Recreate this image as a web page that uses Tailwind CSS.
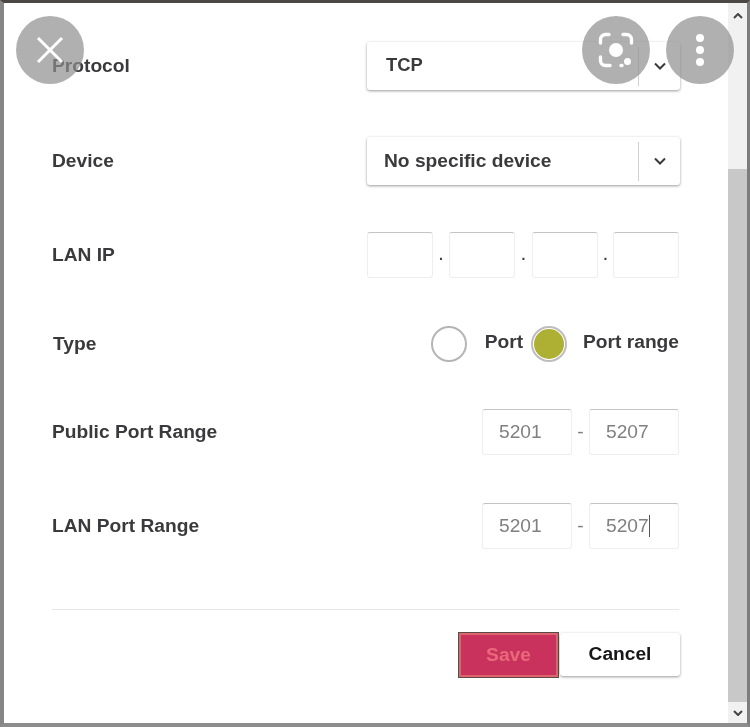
<!doctype html>
<html>

<head>
    <meta charset="UTF-8">
    <meta name="viewport" content="width=device-width, initial-scale=1.0">
    <script src="https://cdn.jsdelivr.net/npm/@tailwindcss/browser@4"></script>
</head>

<body class="w-[750px] h-[727px] overflow-hidden bg-[#8a8a8a] font-['Liberation_Sans',Arial,sans-serif]">
    <div class="relative w-[750px] h-[727px] border-t-[3px] border-t-[#4a4744] border-l-[4px] border-l-[#868686] border-r-[3px] border-r-[#7d7d7d] border-b-[4px] border-b-[#8c8c8c] bg-white flex">

        <!-- dialog body -->
        <div class="w-[724px] h-full pl-[48px] pr-[49px] pt-[39px] text-[#3a3a3c] font-bold text-[19.2px] blur-[0.6px]">

            <div class="flex items-center justify-between h-[48px]">
                <span class="pt-px">Protocol</span>
                <div class="-mr-px w-[313px] h-[48px] rounded-[3px] bg-white shadow-[0_1px_3px_rgba(0,0,0,0.4)] flex items-center">
                    <span class="flex-1 pl-[19px] pb-[2px] text-[18.4px]">TCP</span>
                    <div class="w-px h-[39px] bg-[#d0d0d0]"></div>
                    <div class="w-[41px] flex justify-center">
                        <svg width="12" height="8" viewBox="0 0 12 8" fill="none" stroke="#3a3a3c" stroke-width="2"><path d="M1 1.5l5 5 5-5" /></svg>
                    </div>
                </div>
            </div>

            <div class="flex items-center justify-between h-[48px] mt-[47px]">
                <span class="pt-px">Device</span>
                <div class="-mr-px w-[313px] h-[48px] rounded-[3px] bg-white shadow-[0_1px_3px_rgba(0,0,0,0.4)] flex items-center">
                    <span class="flex-1 pl-[17px]">No specific device</span>
                    <div class="w-px h-[39px] bg-[#d0d0d0]"></div>
                    <div class="w-[41px] flex justify-center">
                        <svg width="12" height="8" viewBox="0 0 12 8" fill="none" stroke="#3a3a3c" stroke-width="2"><path d="M1 1.5l5 5 5-5" /></svg>
                    </div>
                </div>
            </div>

            <div class="flex items-center justify-between h-[46px] mt-[47px]">
                <span class="pt-px">LAN IP</span>
                <div class="flex items-center">
                    <div class="w-[66px] h-[46px] rounded-[3px] border border-[#eeeeee] border-t-[#c4c4c4] bg-white"></div>
                    <span class="w-[16px] text-center text-[14px]">.</span>
                    <div class="w-[66px] h-[46px] rounded-[3px] border border-[#eeeeee] border-t-[#c4c4c4] bg-white"></div>
                    <span class="w-[17px] text-center text-[14px]">.</span>
                    <div class="w-[66px] h-[46px] rounded-[3px] border border-[#eeeeee] border-t-[#c4c4c4] bg-white"></div>
                    <span class="w-[15px] text-center text-[14px]">.</span>
                    <div class="w-[66px] h-[46px] rounded-[3px] border border-[#eeeeee] border-t-[#c4c4c4] bg-white"></div>
                </div>
            </div>

            <div class="flex items-center justify-between h-[36px] mt-[48px]">
                <span class="ml-px pt-px">Type</span>
                <div class="flex items-center">
                    <div class="w-[36px] h-[36px] rounded-full border-2 border-[#b5b5b5] bg-white"></div>
                    <span class="ml-[17.500px] -mt-[4px]">Port</span>
                    <div class="ml-[8px] w-[36px] h-[36px] rounded-full border-2 border-[#bdbdbd] bg-white flex items-center justify-center">
                        <div class="w-[30px] h-[30px] rounded-full bg-[#aeb033]"></div>
                    </div>
                    <span class="ml-[16px] -mt-[4px]">Port range</span>
                </div>
            </div>

            <div class="flex items-center justify-between h-[46px] mt-[47px]">
                <span class="pt-px">Public Port Range</span>
                <div class="flex items-center font-normal text-[#808080]">
                    <div class="w-[90px] h-[46px] pl-[16px] flex items-center rounded-[3px] border border-[#eeeeee] border-t-[#c4c4c4] bg-white">5201</div>
                    <span class="w-[17px] text-center">-</span>
                    <div class="w-[90px] h-[46px] pl-[16px] flex items-center rounded-[3px] border border-[#eeeeee] border-t-[#c4c4c4] bg-white">5207</div>
                </div>
            </div>

            <div class="flex items-center justify-between h-[46px] mt-[48px]">
                <span class="pt-px">LAN Port Range</span>
                <div class="flex items-center font-normal text-[#808080]">
                    <div class="w-[90px] h-[46px] pl-[16px] flex items-center rounded-[3px] border border-[#eeeeee] border-t-[#c4c4c4] bg-white">5201</div>
                    <span class="w-[17px] text-center">-</span>
                    <div class="w-[90px] h-[46px] pl-[16px] flex items-center rounded-[3px] border border-[#eeeeee] border-t-[#c4c4c4] bg-white">5207<span class="w-px h-[22px] bg-[#555]"></span></div>
                </div>
            </div>

            <div class="h-px bg-[#e6e6e6] mt-[60px]"></div>

            <div class="flex justify-end items-start mt-[23px] -mr-px">
                <button class="w-[99px] h-[44px] bg-[#c9325c] border-2 border-[#e0646e] outline outline-1 outline-[#5a4a4a] text-[#e9697a]">Save</button>
                <button class="ml-[2px] w-[120px] h-[43px] rounded-[3px] bg-white text-[#17171a] shadow-[0_1px_3px_rgba(0,0,0,0.4)]">Cancel</button>
            </div>
        </div>

        <!-- scrollbar -->
        <div class="w-[19px] h-full flex flex-col bg-[#f1f1f1]">
            <div class="h-[166px] flex justify-center pt-[10px]">
                <svg width="10" height="6" viewBox="0 0 10 6" fill="none" stroke="#444" stroke-width="2"><path d="M1 5l4-4 4 4" /></svg>
            </div>
            <div class="flex-1 bg-[#c8c8c8]"></div>
            <div class="h-[21px] flex justify-center items-center">
                <svg width="10" height="6" viewBox="0 0 10 6" fill="none" stroke="#444" stroke-width="2"><path d="M1 1l4 4 4-4" /></svg>
            </div>
        </div>

        <!-- image overlay buttons -->
        <div class="absolute left-[12px] top-[13px] w-[68px] h-[68px] rounded-full bg-[#8e8e8e]/70 flex items-center justify-center">
            <svg width="30" height="30" viewBox="0 0 30 30" stroke="#fff" stroke-width="3"><path d="M3 3l24 24M27 3L3 27" /></svg>
        </div>
        <div class="absolute left-[578px] top-[13px] w-[68px] h-[68px] rounded-full bg-[#8e8e8e]/70 flex items-center justify-center">
            <svg width="36" height="36" viewBox="0 0 36 36" fill="none" stroke="#fff" stroke-width="3.4" stroke-linecap="round">
                <path d="M11 2.500H7.500a5 5 0 0 0-5 5V11M25 2.500h3.500a5 5 0 0 1 5 5V11M2.500 25v3.500a5 5 0 0 0 5 5H12M23 33.500h1" />
                <circle cx="18" cy="18" r="7" fill="#fff" stroke="none" />
                <circle cx="29.500" cy="29.500" r="3.500" fill="#fff" stroke="none" />
            </svg>
        </div>
        <div class="absolute left-[662px] top-[13px] w-[68px] h-[68px] rounded-full bg-[#8e8e8e]/70 flex flex-col items-center justify-center gap-[4px]">
            <div class="w-[8px] h-[8px] rounded-full bg-white"></div>
            <div class="w-[8px] h-[8px] rounded-full bg-white"></div>
            <div class="w-[8px] h-[8px] rounded-full bg-white"></div>
        </div>
    </div>
</body>

</html>
